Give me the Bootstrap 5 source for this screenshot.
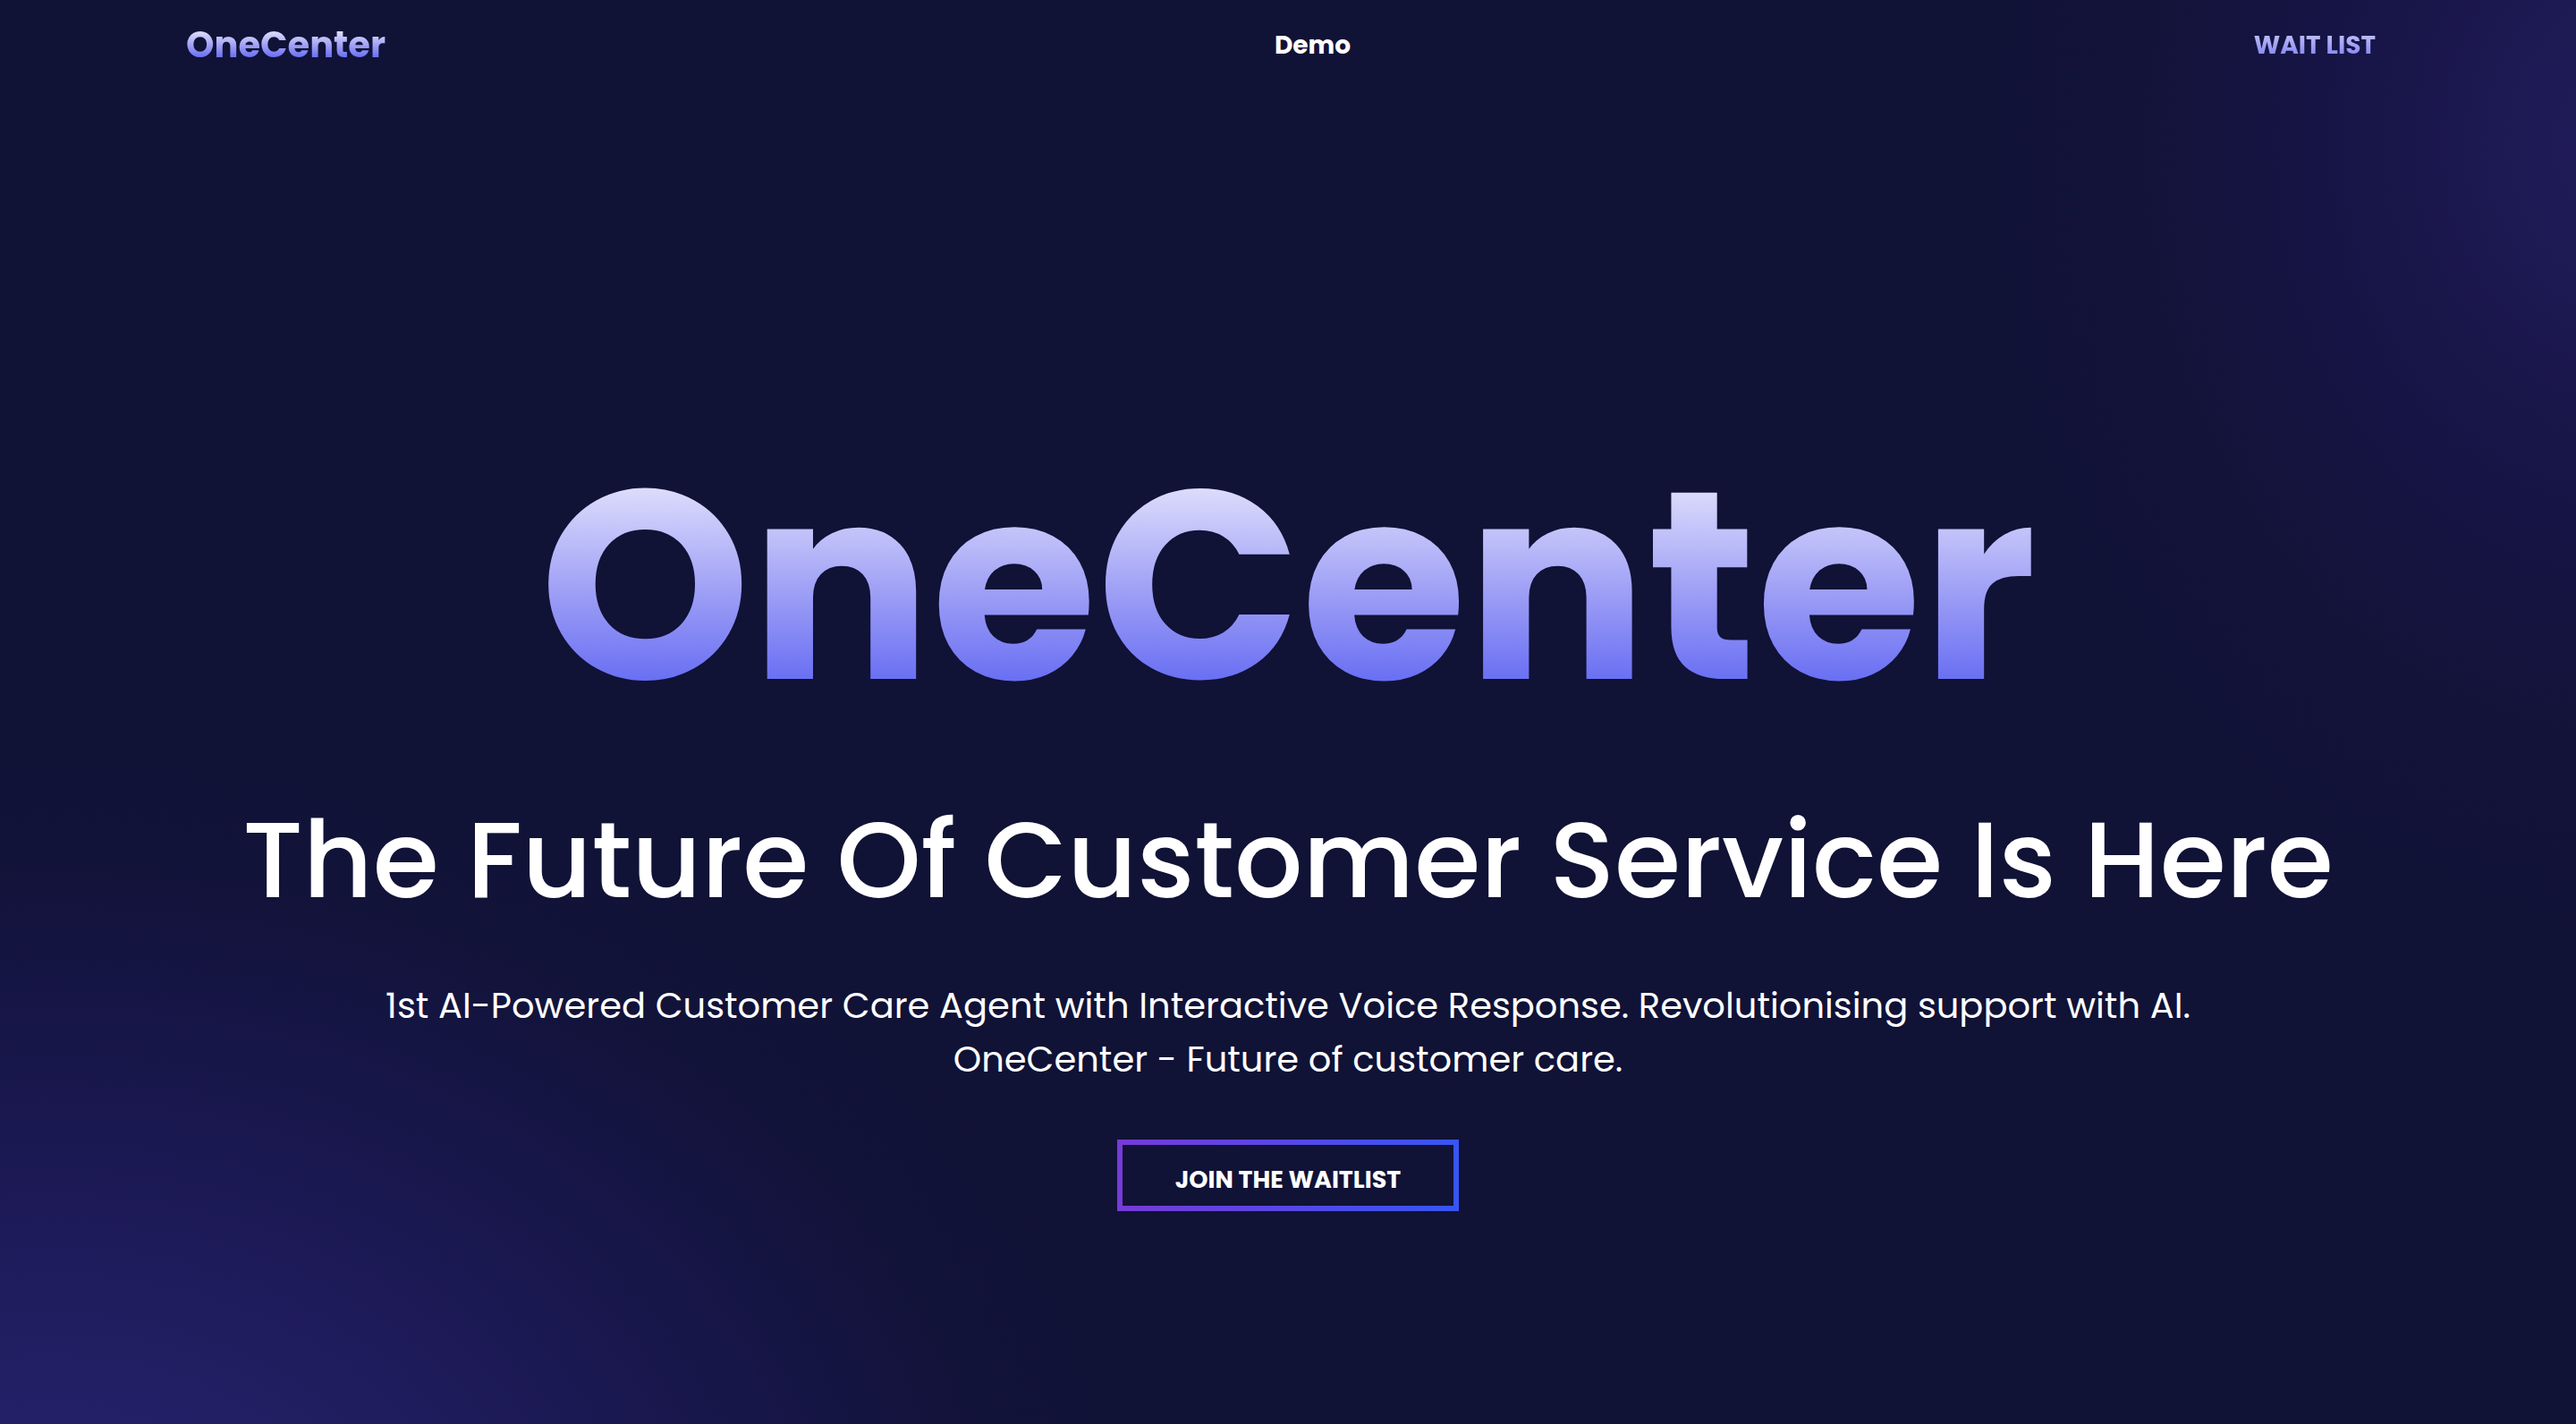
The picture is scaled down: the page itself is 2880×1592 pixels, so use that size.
<!DOCTYPE html>
<html lang="en">
<head>
<meta charset="utf-8">
<meta name="viewport" content="width=device-width, initial-scale=1">
<title>OneCenter</title>
<link href="https://cdn.jsdelivr.net/npm/bootstrap@5.3.0/dist/css/bootstrap.min.css" rel="stylesheet">
<style>
body {
  font-family: Poppins, Inter, sans-serif;
  color: #fff;
  background:
    radial-gradient(1270px 990px at 2% 113%, #26226f 0%, #232068 22%, #1b1953 51%, #151544 71%, #121339 85%, rgba(16,18,54,0) 100%),
    radial-gradient(800px 980px at 102% 10%, #221d5c 0%, #1b174e 26%, #161444 44%, #131339 70%, rgba(16,18,54,0) 100%),
    #101236;
}
.site-nav { padding: 0 208px; height: 100px; }
.grad-text {
  background: linear-gradient(180deg, #ededfe 0%, #dcdcfc 14%, #c2c3f9 30%, #9a9bf5 55%, #6a70f3 85%, #6065f1 100%);
  -webkit-background-clip: text;
  background-clip: text;
  color: transparent;
}
.brand { font-size: 40px; line-height: 40px; font-weight: 700; }
.nav-text { font-size: 28px; line-height: 40px; font-weight: 700; padding: 16px 0 14px; }
.wordmark { font-size: 300px; line-height: 300px; font-weight: 700; margin-bottom: 82px; }
.tagline { font-size: 120px; line-height: 150px; font-weight: 500; margin-bottom: 58px; }
.intro { font-size: 40px; line-height: 60px; margin-bottom: 60px; }
.hero { padding-top: 166px; }
.btn-wait {
  border: 6px solid;
  border-image: linear-gradient(to right, #763bd8, #3755f2) 1;
  color: #fff; background: none; border-radius: 0;
  font-size: 27px; line-height: 40px; font-weight: 700;
  padding: 19px 59px 9px;
}
</style>
</head>
<body class="min-vh-100 d-flex flex-column">
<nav class="site-nav d-flex justify-content-between align-items-center">
  <a href="#" class="brand grad-text text-decoration-none">OneCenter</a>
  <a href="#demo" class="nav-text text-white text-decoration-none">Demo</a>
  <a href="#waitlist" class="nav-text grad-text px-3 text-decoration-none">WAIT LIST</a>
</nav>
<main class="hero flex-grow-1 d-flex flex-column align-items-center justify-content-center text-center">
  <h1 class="wordmark grad-text">OneCenter</h1>
  <h2 class="tagline">The Future Of Customer Service Is Here</h2>
  <p class="intro">1st AI-Powered Customer Care Agent with Interactive Voice Response. Revolutionising support with AI.<br>OneCenter - Future of customer care.</p>
  <button type="button" class="btn btn-wait">JOIN THE WAITLIST</button>
</main>
<script src="https://cdn.jsdelivr.net/npm/bootstrap@5.3.0/dist/js/bootstrap.bundle.min.js"></script>
</body>
</html>
